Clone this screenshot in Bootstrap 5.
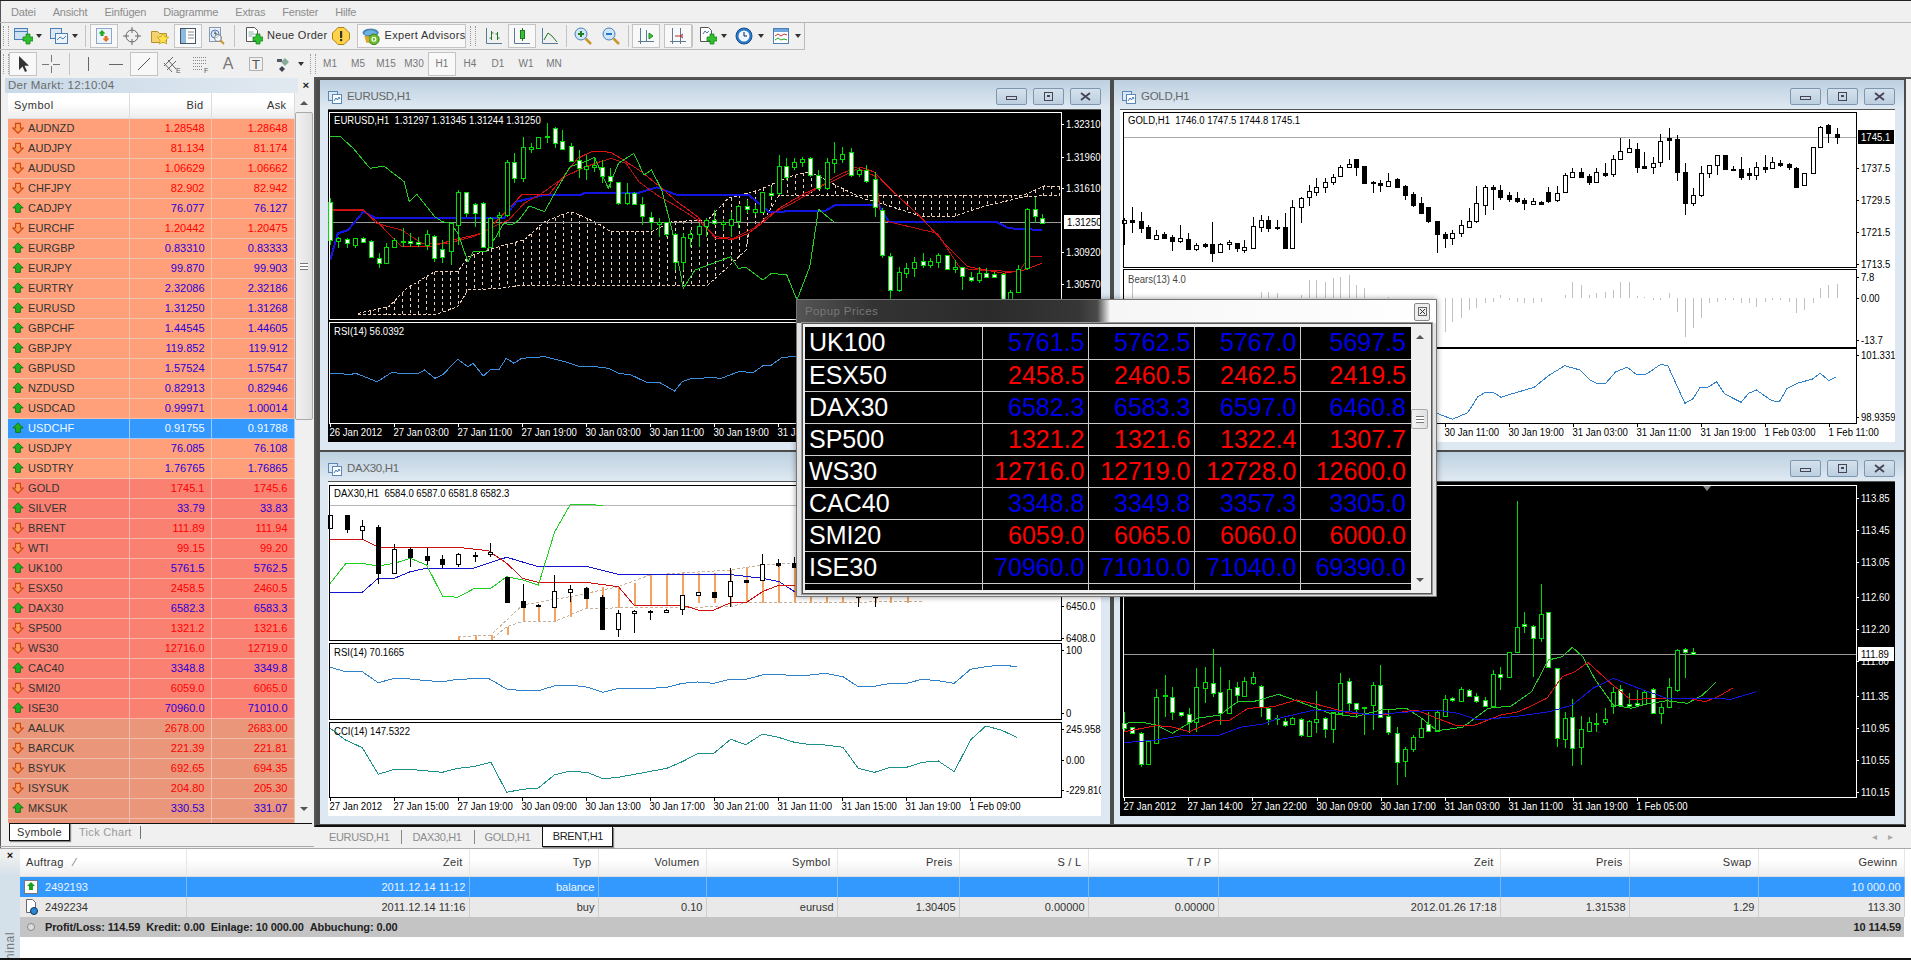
<!DOCTYPE html>
<html lang="de">
<head>
<meta charset="utf-8">
<title>MetaTrader</title>
<link href="https://cdn.jsdelivr.net/npm/bootstrap@5.3.0/dist/css/bootstrap.min.css" rel="stylesheet">
<style>
html,body{margin:0;height:960px;overflow:hidden}
body{width:1911px;background:#f0f0f0;font:11px/1.2 "Liberation Sans",Arial,sans-serif;color:#333;border-top:1px solid #222;border-bottom:2px solid #111}
.fx-shell{height:957px;position:relative;box-shadow:inset 1px 0 #555}
.fx-menu{height:22px;gap:17px;padding:2px 0 0 11px;color:#8c8c8c;border-bottom:1px solid #b4b4b4;letter-spacing:-.2px}
.fx-tool1{height:27px;width:805px;border-bottom:1px solid #bbb;border-right:1px solid #bbb}
.fx-tool2{height:27px}
.fx-grip{width:6px;height:20px;margin-left:3px;border-left:1px dotted #999;border-right:1px dotted #999;flex:none}
.fx-tb{width:28px;height:24px;flex:none;display:flex;align-items:center;justify-content:center;color:#777;font-size:10px}
.fx-tb svg{width:20px;height:20px}
.fx-on{background:#f8f8f8;border:1px solid #c4c4c4}
.fx-care{width:0;height:0;border:3px solid transparent;border-top:4px solid #333;border-bottom:0;margin:0 3px 0 -1px;flex:none}
.fx-sep{width:1px;height:22px;background:#c4c4c4;margin:0 4px;flex:none}
.fx-sep.fx-s2{margin:0 2px}
.fx-sep.fx-s3{margin:0 3px}
.fx-sep.fx-s0{margin:0}
.fx-label{color:#333;letter-spacing:.3px;white-space:nowrap;flex:none}
.fx-ea{width:109px;height:24px;margin-left:2px;gap:3px;padding-left:4px;flex:none}
.fx-main{height:770px}
.fx-panel{width:314px;padding-left:5px;flex:none;border-bottom:1px solid #aaa}
.fx-phead{height:15px;margin:1px 0 0;padding-left:3px;background:linear-gradient(90deg,#c8d9e8,#e3eaf1);color:#6b6b6b;font-size:11.5px;line-height:15px;letter-spacing:.25px}
.fx-x{width:16px;text-align:center;font-weight:700;color:#222;background:#f0f0f0}
.fx-listwrap{height:730px;padding-left:3px;overflow:hidden}
.fx-mw{width:286px;table-layout:fixed;margin:0}
.fx-mw col:nth-child(1){width:121px}
.fx-mw col:nth-child(2){width:82px}
.fx-mw col:nth-child(3){width:83px}
.fx-mw>:not(caption)>*>*{padding:0 6px 0 0;height:20px;border-bottom:1px solid #f2c4b0;border-right:1px solid #f2c4b0;background:#ffa07a;box-shadow:none;font-size:11px;line-height:19px;text-align:right;color:#f00;vertical-align:middle}
.fx-mw>thead>tr>th{height:25px;background:linear-gradient(#fff 40%,#ededed);color:#333;font-weight:400;border-color:#ddd;padding-right:7px;letter-spacing:.4px}
.fx-mw>thead>tr>th:first-child{text-align:left;padding-left:6px;letter-spacing:.5px}
.fx-mw td:first-child{text-align:left;padding-left:4px;color:#333;white-space:nowrap;letter-spacing:.1px}
.fx-mw td:first-child svg{width:12px;height:12px;margin-right:4px;vertical-align:-2px}
.fx-mw .fx-up td{color:#2a00d6}
.fx-mw .fx-up td:first-child{color:#333}
.fx-mw .fx-idx td{background:#fa8072;border-color:#f9b6ac}
.fx-mw .fx-stk td{background:#e9967a;border-color:#eebfae}
.fx-mw .fx-sel td{background:#39f;color:#f4f9ff;border-color:#9ccbff}
.fx-mw .fx-sel td:first-child{color:#f4f9ff}
.fx-scroll{width:18px;flex:none;background:#f0f0f0;display:flex;flex-direction:column;height:725px}
.fx-arrow{height:19px;display:flex;align-items:center;justify-content:center;flex:none}
.fx-ua{width:0;height:0;border:4px solid transparent;border-bottom:4px solid #555;border-top:0}
.fx-da{width:0;height:0;border:4px solid transparent;border-top:4px solid #555;border-bottom:0}
.fx-thumb{background:linear-gradient(90deg,#f2f2f2,#e0e0e0);border:1px solid #aaa;border-radius:2px;display:flex;align-items:center;justify-content:center;flex:none}
.fx-thumb i{display:block;width:8px;height:7px;border-top:1px solid #777;border-bottom:1px solid #777;background:linear-gradient(#fff 2px,#777 2px,#777 3px,#fff 3px)}
.fx-barthumb{height:308px}
.fx-bottomarrow{margin-top:auto}
.fx-pthumb{height:20px;margin-top:63px}
.fx-mtabs{height:18px;margin-left:4px;margin-right:2px;border-top:1px solid #111;gap:9px;color:#999;letter-spacing:.3px}
.fx-activetab{width:61px;height:18px;margin-top:-1px;background:#fff;color:#333;border:1px solid #111;text-align:center;line-height:16px;box-shadow:1px 1px 1px #888}
.fx-right{min-width:0;border-top:2px solid #555}
.fx-mdi{height:748px;padding:1px 0 0 4px;width:1592px;display:grid;grid-template-columns:790px 790px;grid-template-rows:370px 372px;column-gap:4px;row-gap:2px;background:#4c4c4c;border-bottom:2px solid #111;border-left:2px solid #555}
.fx-win{display:flex;flex-direction:column;padding:0 9px 8px 8px;background:#dde8f2;min-height:0}
.fx-win2{padding-left:6px}
.fx-wt{height:29px;flex:none;gap:5px;margin:0 -9px 0 -8px;padding:4px 9px 0 8px;background:linear-gradient(#bdd0e0,#dfe9f2);color:#666;font-size:11.5px;letter-spacing:-.3px}
.fx-win2 .fx-wt{margin-left:-6px}
.fx-wt svg{width:14px;height:14px}
.fx-wb{width:31px;height:17px;border:1px solid #7d97b0;border-radius:2px;background:linear-gradient(#d5e1ec,#bccfe0);display:flex;align-items:center;justify-content:center;margin-left:1px}
.fx-wb svg{width:11px;height:9px}
.fx-client{flex:1;min-height:0;border-top:1px solid #555}
.fx-client svg{display:block;width:100%;height:100%}
.fx-tabs{height:20px;padding-left:15px;color:#8c8c8c;font-size:11px;letter-spacing:-.35px}
.fx-tab{padding:0 12px 0 0;margin-right:10px;height:14px;line-height:14px;border-right:1px solid #888}
.fx-tabon{background:#fff;color:#222;width:71px;height:20px;line-height:18px;text-align:center;border:1px solid #111;border-top:0;box-shadow:1px 1px 1px #888}
.fx-nav{gap:12px;color:#aaa;font-size:10px;padding-right:18px}
.fx-term{height:110px;border-top:1px solid #aaa;margin-top:1px}
.fx-strip{width:20px;flex:none;background:linear-gradient(#f0f0f0 6%,#d4e0ea 25%);overflow:hidden;color:#777;text-align:center}
.fx-strip b{display:block;color:#111;font-size:11px}
.fx-vert{writing-mode:vertical-rl;transform:rotate(180deg);margin:70px auto 0;font-size:12px;letter-spacing:.6px;display:block;height:50px}
.fx-tt{width:1884px;table-layout:fixed;margin:0}
.fx-tt col:nth-child(1){width:166px}
.fx-tt col:nth-child(2){width:283px}
.fx-tt col:nth-child(3){width:129px}
.fx-tt col:nth-child(4){width:108px}
.fx-tt col:nth-child(5){width:131px}
.fx-tt col:nth-child(6){width:122px}
.fx-tt col:nth-child(7){width:129px}
.fx-tt col:nth-child(8){width:130px}
.fx-tt col:nth-child(9){width:282px}
.fx-tt col:nth-child(10){width:129px}
.fx-tt col:nth-child(11){width:129px}
.fx-tt col:nth-child(12){width:146px}
.fx-tt>:not(caption)>*>*{padding:0 3px 0 0;height:20px;border:0;border-right:1px solid #cfcfcf;background:#e9e9e9;box-shadow:none;text-align:right;font-size:11px;color:#333;line-height:20px;vertical-align:middle}
.fx-tt>thead>tr>th{height:27px;background:linear-gradient(#fff 40%,#ededed);font-weight:400;padding-right:6px;letter-spacing:.3px;border-right-color:#e6e6e6;border-bottom:1px solid #ddd}
.fx-tt>tbody>tr:nth-child(1)>td{background:#39f;color:#eaf4ff;border-right-color:#7ab8f5}
.fx-tt>tbody>tr:nth-child(3)>td{background:#c4c4c4;color:#222;font-weight:700;border:0;letter-spacing:-.1px}
.fx-tt .fx-l{text-align:left;padding-left:4px;white-space:nowrap}
.fx-tt th.fx-l{padding-left:6px}
.fx-tt .fx-l svg{width:14px;height:16px;margin-right:4px;vertical-align:-4px}
.fx-popup{position:absolute;left:796px;top:298px;width:641px;height:298px;border:1px solid #777;background:#e2e2e2;box-shadow:0 0 6px rgba(0,0,0,.4)}
.fx-ptitle{height:23px;padding:0 6px 0 8px;background:linear-gradient(90deg,#555,#333 12%,#2b2b2b 30%,#363636 44%,#4a4a4a 47%,#f6f6f6 49%,#fff);color:#777;font-size:11.5px;letter-spacing:.4px}
.fx-pclose{width:16px;height:18px;border:1px solid #888;background:#eee;border-radius:2px;display:flex;align-items:center;justify-content:center}
.fx-pclose svg{width:9px;height:9px}
.fx-pbody{margin:0 4px 0 5px;height:271px;border:1px solid #555;outline:1px solid #999;background:#f0f0f0;padding:3px 2px}
.fx-pt{width:606px;table-layout:fixed;margin:0}
.fx-pt col:nth-child(1){width:177px}
.fx-pt col:nth-child(2),.fx-pt col:nth-child(3),.fx-pt col:nth-child(4){width:106px}
.fx-pt col:nth-child(5){width:111px}
.fx-pt>:not(caption)>*>*{padding:0 3px 0 0;height:32px;background:#000;box-shadow:none;border:0;border-right:1px solid #ccc;border-bottom:1px solid #ccc;font-size:25px;line-height:31px;text-align:right;color:#f00;overflow:hidden;white-space:nowrap}
.fx-pt td:first-child{text-align:left;color:#fff;padding-left:4px}
.fx-pt td:last-child{border-right:0;padding-right:5px}
.fx-pt .fx-b td:not(:first-child){color:#0000e6}
.fx-pt tr.fx-end td{height:7px;line-height:1px;font-size:1px;border-bottom:0}
.fx-pscroll{height:262px;width:17px;background:#f0f0f0;flex:none}
</style>
</head>
<body>
<svg width="0" height="0" class="d-block position-absolute">
<defs>
<symbol id="i-up" viewBox="0 0 12 12"><path d="M6 .8 11.2 6H8.4v4.4H3.6V6H.8Z" fill="#1fae1f" stroke="#0a6a0a" stroke-width=".8"/></symbol>
<symbol id="i-dn" viewBox="0 0 12 12"><path d="M3.600 1.400h4.800V6h2.800L6 11.200.8 6h2.800Z" fill="#ff9a5c" stroke="#c8460c" stroke-width="1.100"/></symbol>
<symbol id="i-win" viewBox="0 0 14 14"><rect x=".5" y="1.500" width="9" height="9" fill="#dce8f5" stroke="#5b87b8"/><rect x="4.500" y="4.500" width="9" height="9" fill="#fff" stroke="#5b87b8"/><path d="M6 11l2-3 1.500 2 1.500-3 1 2" fill="none" stroke="#3a78b5"/></symbol>
<symbol id="i-plus" viewBox="0 0 20 20"><path d="M10 11h3V8h4v3h3v4h-3v3h-4v-3h-3Z" fill="#2fc02f" stroke="#117a11" stroke-width=".7"/></symbol>
</defs>
</svg>
<div class="fx-shell">
<div class="fx-menu d-flex align-items-center"><span>Datei</span><span>Ansicht</span><span>Einfügen</span><span>Diagramme</span><span>Extras</span><span>Fenster</span><span>Hilfe</span></div>

<div class="fx-tool1 d-flex align-items-center">
<div class="fx-grip"></div>
<div class="fx-tb"><svg viewBox="0 0 20 20"><rect x="1.500" y="2.500" width="13" height="11" fill="#cfe0f2" stroke="#4a7fb5"/><path d="M1.500 5.500h13" stroke="#4a7fb5"/><use href="#i-plus"/></svg></div><i class="fx-care"></i>
<div class="fx-tb"><svg viewBox="0 0 20 20"><rect x="1.500" y="2.500" width="11" height="10" fill="#dce8f5" stroke="#4a7fb5"/><rect x="6.500" y="7.500" width="12" height="10" fill="#eef4fb" stroke="#4a7fb5"/><path d="M8 14l3-3 3 2 3-3" fill="none" stroke="#4a7fb5"/></svg></div><i class="fx-care"></i>
<div class="fx-sep"></div>
<div class="fx-tb fx-on"><svg viewBox="0 0 20 20"><rect x="2.500" y="2.500" width="15" height="15" fill="#eef4fb" stroke="#8aa7c5"/><path d="M8 4l3.500 3.500h-2V10H6.500V7.500h-2Z" fill="#20a820"/><path d="M12 16l-3.500-3.500h2V10h3v2.500h2Z" fill="#e87020"/></svg></div>
<div class="fx-tb"><svg viewBox="0 0 20 20" fill="none" stroke="#666"><circle cx="10" cy="10" r="6"/><path d="M10 1v6M10 13v6M1 10h6M13 10h6"/></svg></div>
<div class="fx-tb"><svg viewBox="0 0 20 20"><path d="M1.500 5.500h6l2 2h7v9h-15Z" fill="#f3d370" stroke="#b8902a"/><path d="M13 7l1.800 3.600 4 .6-2.900 2.800.7 4L13 16.100 9.400 18l.7-4-2.900-2.800 4-.6Z" fill="#ffe14d" stroke="#c09a10" stroke-width=".7"/></svg></div>
<div class="fx-tb fx-on"><svg viewBox="0 0 20 20"><rect x="2.500" y="2.500" width="15" height="15" fill="#fff" stroke="#456"/><rect x="3" y="3" width="5" height="14" fill="#8db8e0"/><path d="M10 6h6M10 9h6M10 12h6" stroke="#888"/></svg></div>
<div class="fx-tb"><svg viewBox="0 0 20 20"><rect x="3.500" y="1.500" width="11" height="14" fill="#eef" stroke="#89a"/><circle cx="9" cy="8" r="4" fill="#d6e8f8" stroke="#4a7fb5"/><path d="M9 5.500V8h2" stroke="#333" fill="none"/><circle cx="12" cy="12" r="3.500" fill="#fff8" stroke="#888"/><path d="M14.500 14.500l3.500 3.500" stroke="#c9962a" stroke-width="2"/></svg></div>
<div class="fx-sep"></div>
<div class="fx-tb"><svg viewBox="0 0 20 20"><path d="M3.500 1.500h8l3 3v11h-11Z" fill="#fff" stroke="#555"/><path d="M5.500 6h5M5.500 8h7M5.500 10h4" stroke="#8aa"/><use href="#i-plus"/></svg></div>
<span class="fx-label">Neue Order</span>
<div class="fx-tb"><svg viewBox="0 0 20 20"><path d="M7 1.500h6l5.500 5.500v6L13 18.500H7L1.500 13V7Z" fill="#ffd24a" stroke="#a98310"/><rect x="9" y="5" width="2.200" height="7" fill="#333"/><rect x="9" y="13" width="2.200" height="2.200" fill="#333"/></svg></div>
<div class="fx-ea fx-on d-flex align-items-center"><svg width="20" height="20" viewBox="0 0 20 20"><ellipse cx="9" cy="6.500" rx="8" ry="3.800" fill="#4a93c8" stroke="#2a5f8a" stroke-width=".7"/><path d="M3 6q6-4 12 0v3H3Z" fill="#6fb2e0"/><circle cx="12.500" cy="13.500" r="5.500" fill="#6cbf2c" stroke="#3a7a10"/><path d="M2.500 10h5v7h-3Z" fill="#d8a82a"/><circle cx="12.500" cy="13.500" r="2" fill="none" stroke="#fff" stroke-width="1.300"/></svg><span class="fx-label">Expert Advisors</span></div>
<div class="fx-grip ms-1 me-1"></div>
<div class="fx-tb"><svg viewBox="0 0 20 20" fill="none" stroke="#5a7a98"><path d="M2.500 2v15.500H18"/><path d="M7.500 5v9M5.500 12h2M7.500 7h2M13.500 6v8M11.500 8h2M13.500 12h2" stroke="#207820"/></svg></div>
<div class="fx-tb fx-on"><svg viewBox="0 0 20 20" fill="none" stroke="#5a7a98"><path d="M2.500 2v15.500H18"/><path d="M10.500 2v13" stroke="#207820"/><rect x="8.500" y="4.500" width="4" height="8" fill="#38c038" stroke="#207820"/></svg></div>
<div class="fx-tb"><svg viewBox="0 0 20 20" fill="none" stroke="#5a7a98"><path d="M2.500 2v15.500H18"/><path d="M4 14l4-7 4 3 5 6" stroke="#207820"/></svg></div>
<div class="fx-sep fx-s2"></div>
<div class="fx-tb"><svg viewBox="0 0 20 20"><circle cx="8" cy="8" r="6" fill="#cfe6fa" stroke="#4a7fb5"/><path d="M5 8h6M8 5v6" stroke="#1f7f1f" stroke-width="2"/><path d="M12.500 12.500l5.500 5.500" stroke="#c9962a" stroke-width="2.500"/></svg></div>
<div class="fx-tb"><svg viewBox="0 0 20 20"><circle cx="8" cy="8" r="6" fill="#cfe6fa" stroke="#4a7fb5"/><path d="M5 8h6" stroke="#27c" stroke-width="2"/><path d="M12.500 12.500l5.500 5.500" stroke="#c9962a" stroke-width="2.500"/></svg></div>
<div class="fx-sep fx-s3"></div>
<div class="fx-tb fx-on"><svg viewBox="0 0 20 20" fill="none" stroke="#5a7a98"><path d="M4.500 2v16M2 15.500h16M10.500 4v12"/><path d="M13 7l4 3-4 3Z" fill="#3c3" stroke="#282"/></svg></div>
<div class="fx-tb fx-on ms-1"><svg viewBox="0 0 20 20" fill="none" stroke="#5a7a98"><path d="M4.500 2v16M2 15.500h16M12.500 2v16"/><path d="M7 10h8" stroke="#a33"/><path d="M15 8l-3 2 3 2" stroke="#a33"/></svg></div>
<div class="fx-sep fx-s0"></div>
<div class="fx-tb"><svg viewBox="0 0 20 20"><path d="M3.500 1.500h8l3 3v11h-11Z" fill="#fff" stroke="#555"/><path d="M6 8l2-3 2 2 2-2" stroke="#47a" fill="none"/><use href="#i-plus"/></svg></div><i class="fx-care ms-0"></i>
<div class="fx-tb"><svg viewBox="0 0 20 20"><circle cx="10" cy="10" r="8" fill="#2a78c8" stroke="#15508c"/><circle cx="10" cy="10" r="5.500" fill="#eef6ff"/><path d="M10 6v4h3" stroke="#124" fill="none"/></svg></div><i class="fx-care ms-0"></i>
<div class="fx-tb"><svg viewBox="0 0 20 20"><rect x="2.500" y="2.500" width="15" height="15" fill="#fff" stroke="#4a7fb5"/><rect x="3" y="3" width="14" height="3" fill="#6ca6dc"/><path d="M4 10l3-2 3 2 3-2 3 1" fill="none" stroke="#c33"/><path d="M4 14l3-2 3 2 3-1 3 1" fill="none" stroke="#2a2"/></svg></div><i class="fx-care ms-0"></i>
</div>

<div class="fx-tool2 d-flex align-items-center">
<div class="fx-grip"></div>
<div class="fx-tb fx-on"><svg viewBox="0 0 20 20"><path d="M6 2v14l3.500-3.500 2.500 5.500 2-1-2.500-5.300H16Z" fill="#333"/></svg></div>
<div class="fx-tb"><svg viewBox="0 0 20 20" stroke="#777"><path d="M10.500 1v7M10.500 12v7M1 10.500h7M12 10.500h7"/></svg></div>
<div class="fx-sep"></div>
<div class="fx-tb"><svg viewBox="0 0 20 20" stroke="#666"><path d="M10.500 3v14"/></svg></div>
<div class="fx-tb"><svg viewBox="0 0 20 20" stroke="#666"><path d="M3 10.500h14"/></svg></div>
<div class="fx-tb fx-on"><svg viewBox="0 0 20 20" stroke="#555"><path d="M4 16L16 4"/></svg></div>
<div class="fx-tb"><svg viewBox="0 0 20 20" stroke="#666" fill="none"><path d="M2 12l9-9M5 16l9-9M2 9l8 9M6 6l8 9"/><text x="14" y="19" font-size="7" fill="#555" stroke="none">E</text></svg></div>
<div class="fx-tb"><svg viewBox="0 0 20 20" stroke="#888" stroke-dasharray="1 1"><path d="M3 3.500h14M3 6.500h14M3 9.500h14M3 12.500h10M3 15.500h10"/><text x="14" y="19" font-size="7" fill="#555" stroke="none" stroke-dasharray="0">F</text></svg></div>
<div class="fx-tb"><span class="fs-6">A</span></div>
<div class="fx-tb"><svg viewBox="0 0 20 20"><rect x="3.500" y="3.500" width="13" height="13" fill="none" stroke="#777" stroke-dasharray="1 1"/><text x="6" y="15" font-size="13" fill="#555">T</text></svg></div>
<div class="fx-tb"><svg viewBox="0 0 20 20"><path d="M3 5h5v3H3Z" fill="#556"/><path d="M11 4l4 4-4 4-4-4Z" fill="#8a9"/><path d="M8 12l3 3-3 3-3-3Z" fill="#445"/></svg></div><i class="fx-care ms-0"></i>
<div class="fx-grip"></div>
<div class="fx-tb">M1</div><div class="fx-tb">M5</div><div class="fx-tb">M15</div><div class="fx-tb">M30</div><div class="fx-tb fx-on">H1</div><div class="fx-tb">H4</div><div class="fx-tb">D1</div><div class="fx-tb">W1</div><div class="fx-tb">MN</div>
</div>

<div class="fx-main d-flex">
<div class="fx-panel">
<div class="fx-phead d-flex justify-content-between"><span>Der Markt: 12:10:04</span><span class="fx-x">×</span></div>
<div class="fx-listwrap d-flex">
<table class="table fx-mw">
<colgroup><col><col><col></colgroup>
<thead><tr><th>Symbol</th><th>Bid</th><th>Ask</th></tr></thead>
<tbody>
<tr><td><svg><use href="#i-dn"/></svg>AUDNZD</td><td>1.28548</td><td>1.28648</td></tr>
<tr><td><svg><use href="#i-dn"/></svg>AUDJPY</td><td>81.134</td><td>81.174</td></tr>
<tr><td><svg><use href="#i-dn"/></svg>AUDUSD</td><td>1.06629</td><td>1.06662</td></tr>
<tr><td><svg><use href="#i-dn"/></svg>CHFJPY</td><td>82.902</td><td>82.942</td></tr>
<tr class="fx-up"><td><svg><use href="#i-up"/></svg>CADJPY</td><td>76.077</td><td>76.127</td></tr>
<tr><td><svg><use href="#i-dn"/></svg>EURCHF</td><td>1.20442</td><td>1.20475</td></tr>
<tr class="fx-up"><td><svg><use href="#i-up"/></svg>EURGBP</td><td>0.83310</td><td>0.83333</td></tr>
<tr class="fx-up"><td><svg><use href="#i-up"/></svg>EURJPY</td><td>99.870</td><td>99.903</td></tr>
<tr class="fx-up"><td><svg><use href="#i-up"/></svg>EURTRY</td><td>2.32086</td><td>2.32186</td></tr>
<tr class="fx-up"><td><svg><use href="#i-up"/></svg>EURUSD</td><td>1.31250</td><td>1.31268</td></tr>
<tr class="fx-up"><td><svg><use href="#i-up"/></svg>GBPCHF</td><td>1.44545</td><td>1.44605</td></tr>
<tr class="fx-up"><td><svg><use href="#i-up"/></svg>GBPJPY</td><td>119.852</td><td>119.912</td></tr>
<tr class="fx-up"><td><svg><use href="#i-up"/></svg>GBPUSD</td><td>1.57524</td><td>1.57547</td></tr>
<tr class="fx-up"><td><svg><use href="#i-up"/></svg>NZDUSD</td><td>0.82913</td><td>0.82946</td></tr>
<tr class="fx-up"><td><svg><use href="#i-up"/></svg>USDCAD</td><td>0.99971</td><td>1.00014</td></tr>
<tr class="fx-sel"><td><svg><use href="#i-up"/></svg>USDCHF</td><td>0.91755</td><td>0.91788</td></tr>
<tr class="fx-up"><td><svg><use href="#i-up"/></svg>USDJPY</td><td>76.085</td><td>76.108</td></tr>
<tr class="fx-up"><td><svg><use href="#i-up"/></svg>USDTRY</td><td>1.76765</td><td>1.76865</td></tr>
<tr class="fx-idx"><td><svg><use href="#i-dn"/></svg>GOLD</td><td>1745.1</td><td>1745.6</td></tr>
<tr class="fx-idx fx-up"><td><svg><use href="#i-up"/></svg>SILVER</td><td>33.79</td><td>33.83</td></tr>
<tr class="fx-idx"><td><svg><use href="#i-dn"/></svg>BRENT</td><td>111.89</td><td>111.94</td></tr>
<tr class="fx-idx"><td><svg><use href="#i-dn"/></svg>WTI</td><td>99.15</td><td>99.20</td></tr>
<tr class="fx-idx fx-up"><td><svg><use href="#i-up"/></svg>UK100</td><td>5761.5</td><td>5762.5</td></tr>
<tr class="fx-idx"><td><svg><use href="#i-dn"/></svg>ESX50</td><td>2458.5</td><td>2460.5</td></tr>
<tr class="fx-idx fx-up"><td><svg><use href="#i-up"/></svg>DAX30</td><td>6582.3</td><td>6583.3</td></tr>
<tr class="fx-idx"><td><svg><use href="#i-dn"/></svg>SP500</td><td>1321.2</td><td>1321.6</td></tr>
<tr class="fx-idx"><td><svg><use href="#i-dn"/></svg>WS30</td><td>12716.0</td><td>12719.0</td></tr>
<tr class="fx-idx fx-up"><td><svg><use href="#i-up"/></svg>CAC40</td><td>3348.8</td><td>3349.8</td></tr>
<tr class="fx-idx"><td><svg><use href="#i-dn"/></svg>SMI20</td><td>6059.0</td><td>6065.0</td></tr>
<tr class="fx-idx fx-up"><td><svg><use href="#i-up"/></svg>ISE30</td><td>70960.0</td><td>71010.0</td></tr>
<tr class="fx-stk"><td><svg><use href="#i-dn"/></svg>AALUK</td><td>2678.00</td><td>2683.00</td></tr>
<tr class="fx-stk"><td><svg><use href="#i-dn"/></svg>BARCUK</td><td>221.39</td><td>221.81</td></tr>
<tr class="fx-stk"><td><svg><use href="#i-dn"/></svg>BSYUK</td><td>692.65</td><td>694.35</td></tr>
<tr class="fx-stk"><td><svg><use href="#i-dn"/></svg>ISYSUK</td><td>204.80</td><td>205.30</td></tr>
<tr class="fx-stk fx-up"><td><svg><use href="#i-up"/></svg>MKSUK</td><td>330.53</td><td>331.07</td></tr>
<tr class="fx-stk"><td></td><td></td><td></td></tr>
</tbody>
</table>
<div class="fx-scroll">
<div class="fx-arrow"><i class="fx-ua"></i></div>
<div class="fx-thumb fx-barthumb"><i></i></div>
<div class="fx-arrow fx-bottomarrow"><i class="fx-da"></i></div>
</div>
</div>
<div class="fx-mtabs d-flex align-items-center"><span class="fx-activetab">Symbole</span><span class="border-end border-secondary pe-2">Tick Chart</span></div>
</div>

<div class="fx-right flex-grow-1">
<div class="fx-mdi">
<section class="fx-win"><div class="fx-wt d-flex align-items-center"><svg><use href="#i-win"/></svg><span class="flex-grow-1">EURUSD,H1</span><span class="fx-wb"><svg viewBox="0 0 11 9"><rect x=".5" y="4.500" width="10" height="3" fill="none" stroke="#445"/></svg></span><span class="fx-wb"><svg viewBox="0 0 11 9"><rect x="1.500" y=".5" width="8" height="8" fill="none" stroke="#445"/><rect x="4" y="3" width="3" height="2" fill="#445"/></svg></span><span class="fx-wb"><svg viewBox="0 0 11 9"><path d="M1 1l9 7M10 1L1 8" stroke="#445" stroke-width="1.800"/></svg></span></div><div class="fx-client"><svg id="c1" viewBox="328 110 773 332" preserveAspectRatio="none"></svg></div></section>
<section class="fx-win fx-win2"><div class="fx-wt d-flex align-items-center"><svg><use href="#i-win"/></svg><span class="flex-grow-1">GOLD,H1</span><span class="fx-wb"><svg viewBox="0 0 11 9"><rect x=".5" y="4.500" width="10" height="3" fill="none" stroke="#445"/></svg></span><span class="fx-wb"><svg viewBox="0 0 11 9"><rect x="1.500" y=".5" width="8" height="8" fill="none" stroke="#445"/><rect x="4" y="3" width="3" height="2" fill="#445"/></svg></span><span class="fx-wb"><svg viewBox="0 0 11 9"><path d="M1 1l9 7M10 1L1 8" stroke="#445" stroke-width="1.800"/></svg></span></div><div class="fx-client"><svg id="c2" viewBox="1120 110 775 332" preserveAspectRatio="none"></svg></div></section>
<section class="fx-win"><div class="fx-wt d-flex align-items-center"><svg><use href="#i-win"/></svg><span class="flex-grow-1">DAX30,H1</span><span class="fx-wb"><svg viewBox="0 0 11 9"><rect x=".5" y="4.500" width="10" height="3" fill="none" stroke="#445"/></svg></span><span class="fx-wb"><svg viewBox="0 0 11 9"><rect x="1.500" y=".5" width="8" height="8" fill="none" stroke="#445"/><rect x="4" y="3" width="3" height="2" fill="#445"/></svg></span><span class="fx-wb"><svg viewBox="0 0 11 9"><path d="M1 1l9 7M10 1L1 8" stroke="#445" stroke-width="1.800"/></svg></span></div><div class="fx-client"><svg id="c3" viewBox="328 482 773 334" preserveAspectRatio="none"></svg></div></section>
<section class="fx-win fx-win2"><div class="fx-wt d-flex align-items-center"><svg><use href="#i-win"/></svg><span class="flex-grow-1">BRENT,H1</span><span class="fx-wb"><svg viewBox="0 0 11 9"><rect x=".5" y="4.500" width="10" height="3" fill="none" stroke="#445"/></svg></span><span class="fx-wb"><svg viewBox="0 0 11 9"><rect x="1.500" y=".5" width="8" height="8" fill="none" stroke="#445"/><rect x="4" y="3" width="3" height="2" fill="#445"/></svg></span><span class="fx-wb"><svg viewBox="0 0 11 9"><path d="M1 1l9 7M10 1L1 8" stroke="#445" stroke-width="1.800"/></svg></span></div><div class="fx-client"><svg id="c4" viewBox="1120 482 775 334" preserveAspectRatio="none"></svg></div></section>
</div>
<div class="fx-tabs d-flex align-items-center"><span class="fx-tab">EURUSD,H1</span><span class="fx-tab">DAX30,H1</span><span class="fx-tab border-0 me-0">GOLD,H1</span><span class="fx-tabon align-self-start">BRENT,H1</span><span class="fx-nav d-flex ms-auto"><span>◂</span><span>▸</span></span></div>
</div>
</div>

<div class="fx-term d-flex">
<div class="fx-strip"><b>×</b><span class="fx-vert">Terminal</span></div>
<div class="flex-grow-1 bg-white overflow-hidden">
<table class="table fx-tt">
<colgroup><col><col><col><col><col><col><col><col><col><col><col><col></colgroup>
<thead><tr><th class="fx-l">Auftrag &nbsp; <span class="text-secondary">⁄</span></th><th>Zeit</th><th>Typ</th><th>Volumen</th><th>Symbol</th><th>Preis</th><th>S / L</th><th>T / P</th><th>Zeit</th><th>Preis</th><th>Swap</th><th>Gewinn</th></tr></thead>
<tbody>
<tr><td class="fx-l"><svg viewBox="0 0 14 16"><rect x=".5" y="1.500" width="13" height="13" fill="#fff" stroke="#777"/><path d="M7 3l4 4H9v4H5V7H3Z" fill="#1b9e1b"/></svg>&nbsp;2492193</td><td>2011.12.14 11:12</td><td>balance</td><td></td><td></td><td></td><td></td><td></td><td></td><td></td><td></td><td>10 000.00</td></tr>
<tr><td class="fx-l"><svg viewBox="0 0 14 16"><path d="M2.500.5h6l3 3v10h-9Z" fill="#fff" stroke="#667"/><circle cx="10" cy="12" r="3.500" fill="#2a86d6" stroke="#135"/></svg>&nbsp;2492234</td><td>2011.12.14 11:16</td><td>buy</td><td>0.10</td><td>eurusd</td><td>1.30405</td><td>0.00000</td><td>0.00000</td><td>2012.01.26 17:18</td><td>1.31538</td><td>1.29</td><td>113.30</td></tr>
<tr><td class="fx-l overflow-visible" colspan="11"><svg viewBox="0 0 14 16"><circle cx="7" cy="8" r="3.500" fill="#ddd" stroke="#888"/></svg>&nbsp;Profit/Loss: 114.59 &nbsp;Kredit: 0.00 &nbsp;Einlage: 10 000.00 &nbsp;Abbuchung: 0.00</td><td>10 114.59</td></tr>
</tbody>
</table>
</div>
</div>

<div class="fx-popup">
<div class="fx-ptitle d-flex align-items-center justify-content-between"><span>Popup Prices</span><span class="fx-pclose"><svg viewBox="0 0 9 9"><rect x=".5" y=".5" width="8" height="8" fill="none" stroke="#666"/><path d="M2 2l5 5M7 2L2 7" stroke="#333"/></svg></span></div>
<div class="fx-pbody d-flex">
<table class="table fx-pt">
<colgroup><col><col><col><col><col></colgroup>
<tbody>
<tr class="fx-b"><td>UK100</td><td>5761.5</td><td>5762.5</td><td>5767.0</td><td>5697.5</td></tr>
<tr><td>ESX50</td><td>2458.5</td><td>2460.5</td><td>2462.5</td><td>2419.5</td></tr>
<tr class="fx-b"><td>DAX30</td><td>6582.3</td><td>6583.3</td><td>6597.0</td><td>6460.8</td></tr>
<tr><td>SP500</td><td>1321.2</td><td>1321.6</td><td>1322.4</td><td>1307.7</td></tr>
<tr><td>WS30</td><td>12716.0</td><td>12719.0</td><td>12728.0</td><td>12600.0</td></tr>
<tr class="fx-b"><td>CAC40</td><td>3348.8</td><td>3349.8</td><td>3357.3</td><td>3305.0</td></tr>
<tr><td>SMI20</td><td>6059.0</td><td>6065.0</td><td>6060.0</td><td>6000.0</td></tr>
<tr class="fx-b"><td>ISE30</td><td>70960.0</td><td>71010.0</td><td>71040.0</td><td>69390.0</td></tr>
<tr class="fx-end"><td></td><td></td><td></td><td></td><td></td></tr>
</tbody>
</table>
<div class="fx-pscroll d-flex flex-column">
<div class="fx-arrow"><i class="fx-ua"></i></div>
<div class="fx-thumb fx-pthumb"><i></i></div>
<div class="fx-arrow fx-bottomarrow"><i class="fx-da"></i></div>
</div>
</div>
</div>
</div>

<script src="https://cdn.jsdelivr.net/npm/bootstrap@5.3.0/dist/js/bootstrap.bundle.min.js"></script>
<script>
function Chart(id,ox,oy,sx){this.s='';this.id=id;this.ox=ox;this.oy=oy;this.sx=sx}
Chart.prototype={
X(z){return this.ox+z/this.sx},Y(z){return this.oy+z/3},
bg(x,y,w,h,f){this.s+=`<rect x="${x}" y="${y}" width="${w}" height="${h}" fill="${f}"/>`},
pane(x1,y1,x2,y2,c){this.s+=`<rect x="${x1+.5}" y="${y1+.5}" width="${x2-x1}" height="${y2-y1}" fill="none" stroke="${c}" shape-rendering="crispEdges"/>`},
hl(z,x1,x2,c){let y=Math.round(this.Y(z))+.5;this.s+=`<path d="M${x1} ${y}H${x2}" stroke="${c}" shape-rendering="crispEdges"/>`},
line(p,c,w,dash){let d=p.map(a=>this.X(a[0]).toFixed(1)+','+this.Y(a[1]).toFixed(1)).join(' ');this.s+=`<polyline points="${d}" fill="none" stroke="${c}" stroke-width="${w||1}" shape-rendering="crispEdges"${dash?` stroke-dasharray="${dash}"`:''}/>`},
candles(a,st,on,off){let o='';a.forEach(k=>{let x=Math.round(this.X(k[0]))+.5,h=Math.round(this.Y(k[1])),l=Math.round(this.Y(k[2])),t=Math.round(this.Y(k[3]))+.5,b=Math.round(this.Y(k[4]))+.5;o+=`<path d="M${x} ${h}V${l}" stroke="${st}"/><rect x="${x-2}" y="${t}" width="4" height="${Math.max(b-t,1)}" fill="${k[5]?on:off}" stroke="${st}"/>`});this.s+=`<g shape-rendering="crispEdges">${o}</g>`},
text(x,y,t,c){this.s+=`<text transform="translate(${x} ${y}) scale(.87 1)" font-size="11" fill="${c}">${t}</text>`},
times(start,list,c,base){list.forEach((t,i)=>{let zx=start+i*125.4,x=Math.round(this.X(zx))+.5;this.s+=`<path d="M${x} ${base-13}v4" stroke="${c}" shape-rendering="crispEdges"/>`;this.text(x-1,base,t,c)})},
axis(x,items,c){items.forEach(a=>{let y=a[0];this.s+=`<path d="M${x} ${Math.round(y)+.5}h3" stroke="${c}" shape-rendering="crispEdges"/>`;this.text(x+5,y+4,a[1],c)})},
tag(x,y,t,bg,c){this.s+=`<rect x="${x}" y="${y-7}" width="36" height="14" fill="${bg}"/>`;this.text(x+3,y+4,t,c)},
done(){document.getElementById(this.id).innerHTML=this.s}
};

/* EURUSD */
var c=new Chart('c1',320,80,1.96);
c.bg(328,110,773,332,'#000');
var k1=[[20,355,495,365,480,1],[36,470,505,475,483,0],[52,475,505,477,490,1],[68,475,505,475,495,0],[84,472,490,475,485,1],[99,480,530,483,530,1],[115,520,565,533,550,1],[130,490,550,502,550,0],[146,475,505,480,500,0],[162,445,500,482,486,1],[177,460,500,484,488,1],[193,470,500,487,493,1],[209,450,510,463,495,0],[224,465,545,467,535,1],[240,480,550,508,532,1],[256,425,555,430,512,0],[271,330,495,337,435,0],[287,335,410,337,398,1],[303,370,440,372,398,1],[319,365,505,370,502,1],[334,410,505,415,502,0],[350,395,470,405,412,0],[366,240,410,247,405,0],[381,220,310,245,295,1],[397,170,305,200,295,0],[413,190,220,200,208,0],[428,170,205,172,205,0],[444,130,190,168,172,1],[460,140,205,145,188,1],[475,150,210,183,208,1],[491,190,245,197,242,1],[507,210,295,240,265,1],[522,225,300,258,268,0],[538,235,275,255,262,0],[553,240,310,262,287,1],[569,265,325,287,304,1],[585,305,375,305,368,1],[601,310,375,340,368,0],[616,335,375,340,372,1],[632,350,435,373,408,1],[648,395,450,410,427,1],[664,415,470,427,432,0],[679,425,470,427,463,1],[695,460,570,463,545,1],[711,460,570,472,545,0],[726,450,500,463,475,0],[742,430,500,438,463,0],[757,415,470,420,438,0],[773,390,435,420,430,1],[789,420,450,427,433,0],[805,395,470,418,435,0],[820,375,445,378,422,0],[836,360,400,378,388,1],[852,375,405,388,395,0],[867,335,395,337,395,0],[883,320,350,340,345,1],[899,225,345,258,338,0],[914,235,300,258,290,1],[930,235,270,245,260,0],[945,230,260,236,245,0],[961,230,290,235,285,1],[977,270,330,285,325,1],[993,235,330,247,325,0],[1008,185,280,238,250,0],[1024,200,250,222,238,0],[1040,205,290,217,285,1],[1056,265,290,270,283,0],[1071,255,310,270,302,1],[1087,275,410,298,382,1],[1102,385,535,390,525,1],[1118,520,690,527,630,1],[1134,560,635,577,630,0],[1149,550,595,563,578,0],[1165,530,590,547,563,0],[1181,520,565,544,556,1],[1196,535,565,544,555,0],[1212,520,565,526,545,0],[1228,525,570,525,566,1],[1244,540,580,560,566,0],[1259,560,630,562,587,1],[1275,575,605,590,601,1],[1291,560,610,580,600,0],[1306,565,595,580,590,1],[1322,575,595,582,590,1],[1338,580,680,582,665,1],[1353,630,680,635,665,0],[1369,555,640,567,637,0],[1385,385,570,388,565,0],[1401,350,430,388,408,1],[1416,402,430,415,428,1]];
var cu=[[75,700],[135,680],[170,625],[225,575],[270,575],[290,530],[350,500],[400,480],[440,425],[490,395],[510,405],[550,435],[570,455],[650,455],[690,425],[760,420],[800,355],[860,330],[920,290],[960,275],[1010,315],[1050,345],[1100,345],[1380,345],[1420,318],[1450,320]];
var cl=[[75,705],[230,702],[270,680],[290,630],[350,625],[400,615],[760,615],[800,560],[835,510],[840,460],[870,420],[900,345],[1040,345],[1100,370],[1180,410],[1240,410],[1300,380],[1380,350],[1450,345]];
function interp(p,x){for(var i=0;i<p.length-1;i++){if(x>=p[i][0]&&x<=p[i+1][0]){var t=(x-p[i][0])/(p[i+1][0]-p[i][0]);return p[i][1]+t*(p[i+1][1]-p[i][1])}}return null}
var hat='';for(var zx=83;zx<1450;zx+=15.7){var a=interp(cu,zx),b=interp(cl,zx);if(a!=null&&b!=null&&Math.abs(a-b)>8){hat+=`M${Math.round(c.X(zx))+.5} ${c.Y(a).toFixed(1)}V${c.Y(b).toFixed(1)}`}}
c.s+=`<path d="${hat}" stroke="#eccfb4" stroke-dasharray="3 3" fill="none" shape-rendering="crispEdges"/>`;
c.line(cu,'#eccfb4',1,'3 2');c.line(cl,'#eccfb4',1,'3 2');
c.hl(427,329,1061,'#9a9a9a');
c.line([[20,540],[35,460],[55,450],[85,395],[110,415],[230,415],[315,415],[360,415],[385,365],[440,345],[510,345],[520,338],[625,338],[660,322],[700,345],[840,345],[880,395],[990,393],[1010,375],[1095,375],[1115,425],[1325,425],[1350,445],[1415,450]],'#1414e0',2);
c.line([[20,390],[85,392],[115,430],[160,500],[220,500],[260,480],[320,460],[355,410],[395,345],[450,342],[505,235],[535,213],[570,217],[600,245],[630,275],[670,325],[700,365],[740,410],[775,475],[810,478],[840,460],[870,425],[900,385],[950,340],[1010,300],[1060,262],[1085,275],[1120,330],[1180,415],[1230,500],[1270,560],[1340,580],[1380,570],[1415,550]],'#e01010');
c.line([[20,387],[85,390],[110,430],[160,450],[200,490],[250,490],[300,470],[340,440],[370,420],[400,370],[430,345],[480,290],[520,260],[570,235],[600,250],[625,305],[660,345],[700,380],[740,420],[775,470],[810,475],[850,445],[880,405],[920,375],[980,320],[1010,290],[1050,262],[1090,290],[1100,420],[1210,460],[1255,565],[1290,570],[1370,575],[1390,530],[1415,530]],'#c01010');
c.line([[20,170],[40,170],[65,205],[98,265],[125,258],[165,305],[175,365],[190,343],[225,410],[240,425],[256,430],[270,460],[290,545],[300,515],[325,515],[345,470],[360,430],[375,435],[390,420],[410,378],[440,395],[460,340],[490,260],[520,245],[538,232],[565,325],[585,250],[615,220],[635,285],[650,270],[670,330],[690,450],[712,625],[735,570],[770,550],[805,530],[820,565],[835,562],[868,600],[885,580],[915,585],[935,660],[960,560],[977,388],[1008,427]],'#22d022');
c.candles(k1,'#00e000','#fff','#000');
c.pane(329,112,1061,319,'#fff');c.pane(329,322,1061,423,'#fff');
c.line([[20,882],[40,880],[55,885],[70,880],[90,892],[112,905],[140,878],[190,882],[205,870],[225,895],[240,885],[270,838],[290,860],[300,850],[320,888],[335,868],[350,870],[365,835],[380,850],[395,835],[440,830],[480,845],[505,858],[540,860],[565,865],[585,880],[610,885],[640,907],[665,907],[695,933],[710,905],[730,895],[775,893],[785,896],[820,875],[850,877],[870,855],[885,855],[905,833],[935,828]],'#3c8fdc');
c.text(334,124,'EURUSD,H1 &#160;1.31297 1.31345 1.31244 1.31250','#fff');
c.text(334,335,'RSI(14) 56.0392','#fff');
c.axis(1061,[[124,'1.32310'],[157,'1.31960'],[188,'1.31610'],[252,'1.30920'],[284,'1.30570']],'#fff');
c.tag(1064,222,'1.31250','#fff','#000');
c.times(20,['26 Jan 2012','27 Jan 03:00','27 Jan 11:00','27 Jan 19:00','30 Jan 03:00','30 Jan 11:00','30 Jan 19:00','31 Jan 03:00'],'#fff',436);
c.done();

/* GOLD */
c=new Chart('c2',1110,80,1.957);
c.bg(1120,110,775,332,'#fff');
var k2=[[28,415,495,420,428,0],[44,380,460,420,426,1],[60,395,460,423,443,1],[75,435,475,442,473,1],[91,450,480,466,476,0],[106,455,478,462,473,1],[122,465,512,472,482,1],[137,435,490,475,482,0],[153,460,510,477,507,1],[169,490,512,496,506,0],[185,488,505,493,497,1],[200,427,545,492,520,1],[216,490,520,492,517,0],[232,480,510,487,493,0],[248,488,515,490,505,1],[263,480,520,502,509,0],[279,410,505,438,503,0],[295,405,455,420,440,0],[310,408,455,420,443,1],[326,420,450,440,442,1],[342,400,505,442,503,1],[357,360,505,382,503,0],[373,350,430,355,382,0],[389,315,378,332,352,0],[404,295,348,322,335,0],[420,295,340,305,322,0],[436,282,315,290,305,0],[451,255,290,260,287,0],[467,238,265,253,262,0],[482,238,288,238,262,1],[498,258,308,258,308,1],[514,303,338,306,308,1],[529,300,335,310,314,1],[545,280,318,302,317,0],[561,295,325,297,322,1],[577,315,360,318,346,1],[592,335,380,342,375,1],[608,350,400,370,398,1],[623,380,430,382,422,1],[639,422,520,424,462,1],[655,455,503,462,473,1],[670,450,495,460,475,0],[686,420,470,436,460,0],[702,385,440,424,440,0],[717,318,430,370,424,0],[733,315,405,322,374,0],[749,315,390,322,328,1],[764,315,360,330,350,1],[780,335,365,345,356,1],[796,335,370,354,362,1],[811,355,390,361,370,1],[827,355,375,362,372,0],[843,362,375,365,371,1],[858,322,370,337,362,1],[874,318,365,338,360,0],[890,278,340,286,335,0],[905,265,292,277,290,0],[921,265,295,277,290,1],[937,282,315,287,305,1],[952,265,310,277,305,0],[968,250,290,280,285,1],[984,225,290,238,282,0],[999,175,240,212,238,0],[1015,178,218,205,215,0],[1031,190,280,208,260,1],[1046,215,268,258,263,1],[1062,232,283,248,260,0],[1077,163,262,182,245,0],[1093,145,240,175,179,1],[1109,165,302,177,275,1],[1125,250,405,277,368,1],[1140,323,378,346,368,0],[1156,258,350,280,346,0],[1172,255,295,256,280,0],[1187,224,285,224,256,0],[1203,224,268,224,266,1],[1219,258,272,266,268,1],[1234,232,300,268,290,1],[1250,265,300,280,284,1],[1265,245,300,260,284,0],[1281,225,280,262,266,1],[1296,232,268,247,265,0],[1312,240,262,250,254,1],[1328,250,270,253,262,1],[1343,262,325,265,320,1],[1359,280,318,280,316,0],[1375,202,282,202,280,0],[1390,137,205,140,202,0],[1406,133,190,135,160,1],[1422,143,192,163,172,1]];
c.hl(172,1123,1856,'#aaa');
c.candles(k2,'#000','#000','#fff');
c.pane(1123,112,1856,267,'#000');c.pane(1123,269,1856,347,'#000');c.pane(1123,348,1856,423,'#000');
var bars=[[44,45],[295,20],[310,18],[326,15],[373,10],[389,55],[404,55],[420,50],[436,62],[451,65],[467,70],[482,40],[498,30],[545,5],[655,-100],[670,-70],[686,-60],[702,-35],[717,-30],[733,-15],[749,-10],[764,10],[780,-5],[796,-10],[811,-15],[827,-15],[843,-10],[890,10],[905,50],[921,40],[937,10],[952,15],[968,20],[984,25],[999,50],[1015,50],[1031,8],[1046,5],[1062,-5],[1077,-5],[1093,15],[1109,-40],[1125,-115],[1140,-90],[1156,-60],[1172,-15],[1187,-10],[1203,-5],[1219,-5],[1234,-15],[1250,-15],[1265,-25],[1281,-10],[1296,-5],[1312,-5],[1328,-10],[1343,-45],[1359,-35],[1375,-15],[1390,30],[1406,40],[1422,42]];
var bp='';bars.forEach(a=>{var x=Math.round(c.X(a[0]))+.5;bp+=`M${x} ${c.Y(655)}V${c.Y(655-a[1]).toFixed(1)}`});
c.s+=`<path d="${bp}" stroke="#c0c0c0" shape-rendering="crispEdges"/>`;
c.line([[640,1000],[670,1018],[700,998],[720,950],[735,937],[750,937],[765,952],[790,940],[830,922],[860,885],[890,857],[920,870],[940,900],[955,912],[970,910],[990,875],[1012,862],[1032,885],[1050,882],[1078,853],[1092,858],[1125,970],[1140,958],[1155,922],[1170,922],[1187,905],[1203,942],[1235,967],[1250,940],[1265,930],[1295,962],[1310,965],[1325,925],[1345,910],[1375,897],[1390,880],[1407,902],[1422,890]],'#2f80c8');
c.text(1128,124,'GOLD,H1 &#160;1746.0 1747.5 1744.8 1745.1','#000');
c.text(1128,283,'Bears(13) 4.0','#444');
c.axis(1856,[[168,'1737.5'],[200,'1729.5'],[232,'1721.5'],[264,'1713.5'],[277,'7.8'],[298,'0.00'],[340,'-13.7'],[355,'101.3316'],[417,'98.9359']],'#000');
c.tag(1858,137,'1745.1','#000','#fff');
c.times(655,['30 Jan 11:00','30 Jan 19:00','31 Jan 03:00','31 Jan 11:00','31 Jan 19:00','1 Feb 03:00','1 Feb 11:00'],'#000',436);
c.done();

/* DAX */
c=new Chart('c3',320,450,1.96);
c.bg(328,482,773,334,'#fff');
var cld=[[271,560,570],[303,555,570],[335,555,570],[366,530,555],[397,465,515],[428,465,515],[459,465,515],[490,440,500],[521,410,475],[553,410,475],[584,410,475],[615,400,465],[647,375,465],[678,372,465],[710,368,465],[741,368,458],[772,368,458],[804,360,470],[835,350,458],[867,345,458],[898,345,458],[930,340,458],[961,340,458],[992,340,458],[1023,340,458],[1055,340,458],[1087,340,458],[1118,340,458],[1150,340,458]];
var cp='';cld.forEach(a=>{var x=Math.round(c.X(a[0]))+.5;cp+=`M${x} ${c.Y(a[1]).toFixed(1)}V${c.Y(a[2]).toFixed(1)}`});
c.s+=`<path d="${cp}" stroke="#f4a460" stroke-width="2" shape-rendering="crispEdges"/>`;
c.line([[271,560],[335,555],[397,465],[490,440],[584,410],[647,375],[804,360],[867,345],[930,340]],'#c8b09a',1,'3 2');
c.line([[271,570],[335,570],[366,530],[397,515],[459,515],[521,475],[804,470],[835,458],[1180,455]],'#c8b09a',1,'3 2');
c.hl(165,329,1061,'#b5b5b5');
c.line([[20,427],[83,427],[114,385],[146,385],[177,365],[209,355],[300,355],[330,340],[366,322],[428,350],[525,350],[585,373],[800,373],[867,385],[900,395],[930,425]],'#1414d0');
c.line([[20,267],[83,267],[114,292],[270,292],[330,302],[366,340],[397,385],[428,397],[520,397],[585,410],[615,465],[710,465],[741,480],[772,480],[805,458],[835,458],[867,425],[900,405],[930,405]],'#d01010');
c.line([[20,400],[50,342],[83,340],[114,348],[146,340],[177,325],[209,345],[240,438],[270,442],[303,415],[335,415],[366,380],[397,390],[428,405],[460,245],[490,165],[525,163],[555,167]],'#20d020');
var k3=[[20,195,235,195,233,0],[52,195,250,195,237,1],[83,210,270,229,239,0],[114,225,402,230,368,1],[146,282,372,298,368,0],[177,290,350,298,320,1],[209,295,345,319,330,1],[240,315,355,327,342,1],[271,310,350,312,342,0],[303,305,335,315,317,1],[334,280,320,306,313,0],[366,382,455,382,455,1],[397,402,470,453,470,1],[428,462,470,466,468,1],[459,375,470,424,470,0],[490,405,455,417,425,0],[521,410,445,414,443,1],[553,435,537,441,537,1],[584,480,560,490,536,0],[615,480,548,484,490,0],[647,480,510,483,485,1],[678,477,488,479,485,0],[710,435,495,436,478,0],[741,427,437,427,436,0],[772,427,440,427,440,1],[804,355,470,393,439,0],[835,390,395,391,395,1],[867,312,392,343,390,0],[898,327,350,340,345,1],[930,320,350,340,350,1],[1055,400,472,420,440,1],[1087,400,472,420,440,1]];
c.candles(k3,'#000','#000','#fff');
c.pane(329,485,1061,640,'#000');c.pane(329,643,1061,719,'#000');c.pane(329,722,1061,797,'#000');
c.line([[20,652],[50,665],[83,665],[114,698],[146,685],[177,687],[209,692],[240,695],[270,688],[330,685],[366,717],[397,722],[428,722],[459,708],[490,705],[525,712],[555,727],[585,715],[650,715],[680,712],[710,700],[740,696],[772,700],[804,688],[835,688],[867,675],[898,673],[930,677],[961,675],[990,670],[1025,680],[1055,710],[1087,709],[1118,700],[1150,700],[1180,688],[1212,692],[1243,700],[1275,658],[1305,650],[1335,645],[1366,650]],'#2f80c8');
c.line([[20,835],[50,870],[83,893],[114,973],[146,958],[190,960],[240,967],[270,955],[300,950],[335,937],[366,1027],[397,1018],[428,1014],[459,975],[490,963],[525,968],[555,986],[585,982],[620,972],[680,955],[710,935],[741,910],[772,910],[805,868],[835,884],[867,852],[898,862],[930,877],[961,884],[990,885],[1025,892],[1055,955],[1087,967],[1118,952],[1150,952],[1180,937],[1212,933],[1243,965],[1275,870],[1305,828],[1335,840],[1366,862]],'#1c8f88');
c.text(334,497,'DAX30,H1 &#160;6584.0 6587.0 6581.8 6582.3','#000');
c.text(334,656,'RSI(14) 70.1665','#000');
c.text(334,735,'CCI(14) 147.5322','#000');
c.axis(1061,[[606,'6450.0'],[638,'6408.0'],[650,'100'],[713,'0'],[729,'245.9584'],[760,'0.00'],[790,'-229.810']],'#000');
c.times(20,['27 Jan 2012','27 Jan 15:00','27 Jan 19:00','30 Jan 09:00','30 Jan 13:00','30 Jan 17:00','30 Jan 21:00','31 Jan 11:00','31 Jan 15:00','31 Jan 19:00','1 Feb 09:00'],'#000',810);
c.done();

/* BRENT */
c=new Chart('c4',1110,450,1.957);
c.bg(1120,482,775,334,'#000');
c.hl(613,1123,1856,'#9a9a9a');
var k4=[[28,785,845,820,835,1],[44,830,850,832,848,1],[60,845,950,850,942,1],[75,870,945,873,943,0],[91,718,880,740,878,0],[107,675,800,736,738,1],[122,712,810,740,787,1],[138,785,800,787,796,1],[154,775,850,793,815,1],[169,655,845,712,817,0],[185,650,760,697,715,0],[201,598,740,700,728,1],[216,650,825,727,790,1],[232,690,790,718,788,0],[248,695,760,712,735,1],[263,680,740,693,738,0],[279,665,705,682,698,0],[295,705,800,708,772,1],[310,770,825,773,808,1],[326,795,825,805,807,1],[342,805,830,812,824,1],[357,800,825,805,822,0],[373,805,860,808,855,1],[389,810,860,813,857,0],[404,722,850,808,816,0],[420,800,865,805,836,1],[436,785,880,785,838,0],[451,670,795,698,790,0],[467,685,785,693,758,1],[482,760,805,760,777,1],[498,770,855,770,772,1],[514,695,840,706,766,0],[529,645,805,706,802,1],[545,780,855,798,845,1],[561,830,1005,848,935,1],[577,890,980,898,932,0],[592,855,905,862,897,0],[608,805,865,835,860,0],[623,785,845,822,842,1],[639,780,845,785,842,0],[655,735,800,748,798,0],[670,740,755,745,749,1],[686,712,755,718,752,0],[702,718,740,720,737,1],[717,730,760,738,752,1],[733,740,770,750,768,1],[749,660,770,672,768,0],[764,650,720,672,682,1],[780,605,685,606,680,0],[796,152,610,532,605,0],[811,487,550,523,527,1],[827,525,680,527,565,1],[843,402,575,492,565,0],[858,487,655,487,652,1],[874,655,890,655,865,1],[890,785,895,805,868,0],[905,748,948,802,895,1],[921,797,945,838,892,0],[937,800,845,816,842,0],[952,790,845,820,822,1],[968,775,825,806,815,0],[984,710,792,725,768,0],[999,705,770,718,765,1],[1015,730,775,762,768,1],[1031,720,770,760,765,1],[1046,720,765,725,762,0],[1062,715,790,718,788,1],[1078,760,822,772,788,0],[1093,685,770,712,770,0],[1109,597,725,600,720,0],[1125,595,685,598,606,1],[1140,593,612,607,612,1]];
c.candles(k4,'#00e000','#fff','#000');
c.line([[28,820],[60,816],[90,825],[122,850],[170,805],[215,795],[250,755],[280,755],[330,733],[370,755],[430,790],[480,800],[530,780],[580,775],[610,805],[640,842],[690,832],[740,775],[785,768],[825,725],[858,630],[885,620],[905,592],[925,620],[950,690],[985,765],[1020,775],[1050,762],[1090,752],[1130,760],[1160,735],[1185,697]],'#22d022');
c.line([[28,845],[90,827],[120,830],[155,845],[205,812],[235,810],[270,775],[320,770],[365,750],[410,765],[470,790],[530,795],[600,780],[640,805],[675,825],[715,825],[765,795],[800,785],[855,745],[885,680],[910,665],[935,637],[980,700],[1020,750],[1060,745],[1140,747],[1165,755],[1190,740],[1218,715]],'#e01010');
c.line([[28,878],[90,870],[150,855],[215,855],[255,832],[300,822],[330,805],[400,780],[470,785],[510,795],[590,785],[640,780],[680,790],[720,810],[790,800],[860,785],[905,765],[945,715],[985,685],[1040,718],[1090,745],[1180,745],[1215,748],[1265,725]],'#1414e0');
c.pane(1123,485,1856,797,'#fff');
c.s+=`<path d="M1703 486h8l-4 5Z" fill="#888"/>`;
c.axis(1856,[[498,'113.85'],[530,'113.45'],[562,'113.05'],[597,'112.60'],[629,'112.20'],[661,'111.80'],[696,'111.35'],[728,'110.95'],[760,'110.55'],[792,'110.15']],'#fff');
c.tag(1858,654,'111.89','#fff','#000');
c.times(28,['27 Jan 2012','27 Jan 14:00','27 Jan 22:00','30 Jan 09:00','30 Jan 17:00','31 Jan 03:00','31 Jan 11:00','31 Jan 19:00','1 Feb 05:00'],'#fff',810);
c.done();
</script>
</body>
</html>
